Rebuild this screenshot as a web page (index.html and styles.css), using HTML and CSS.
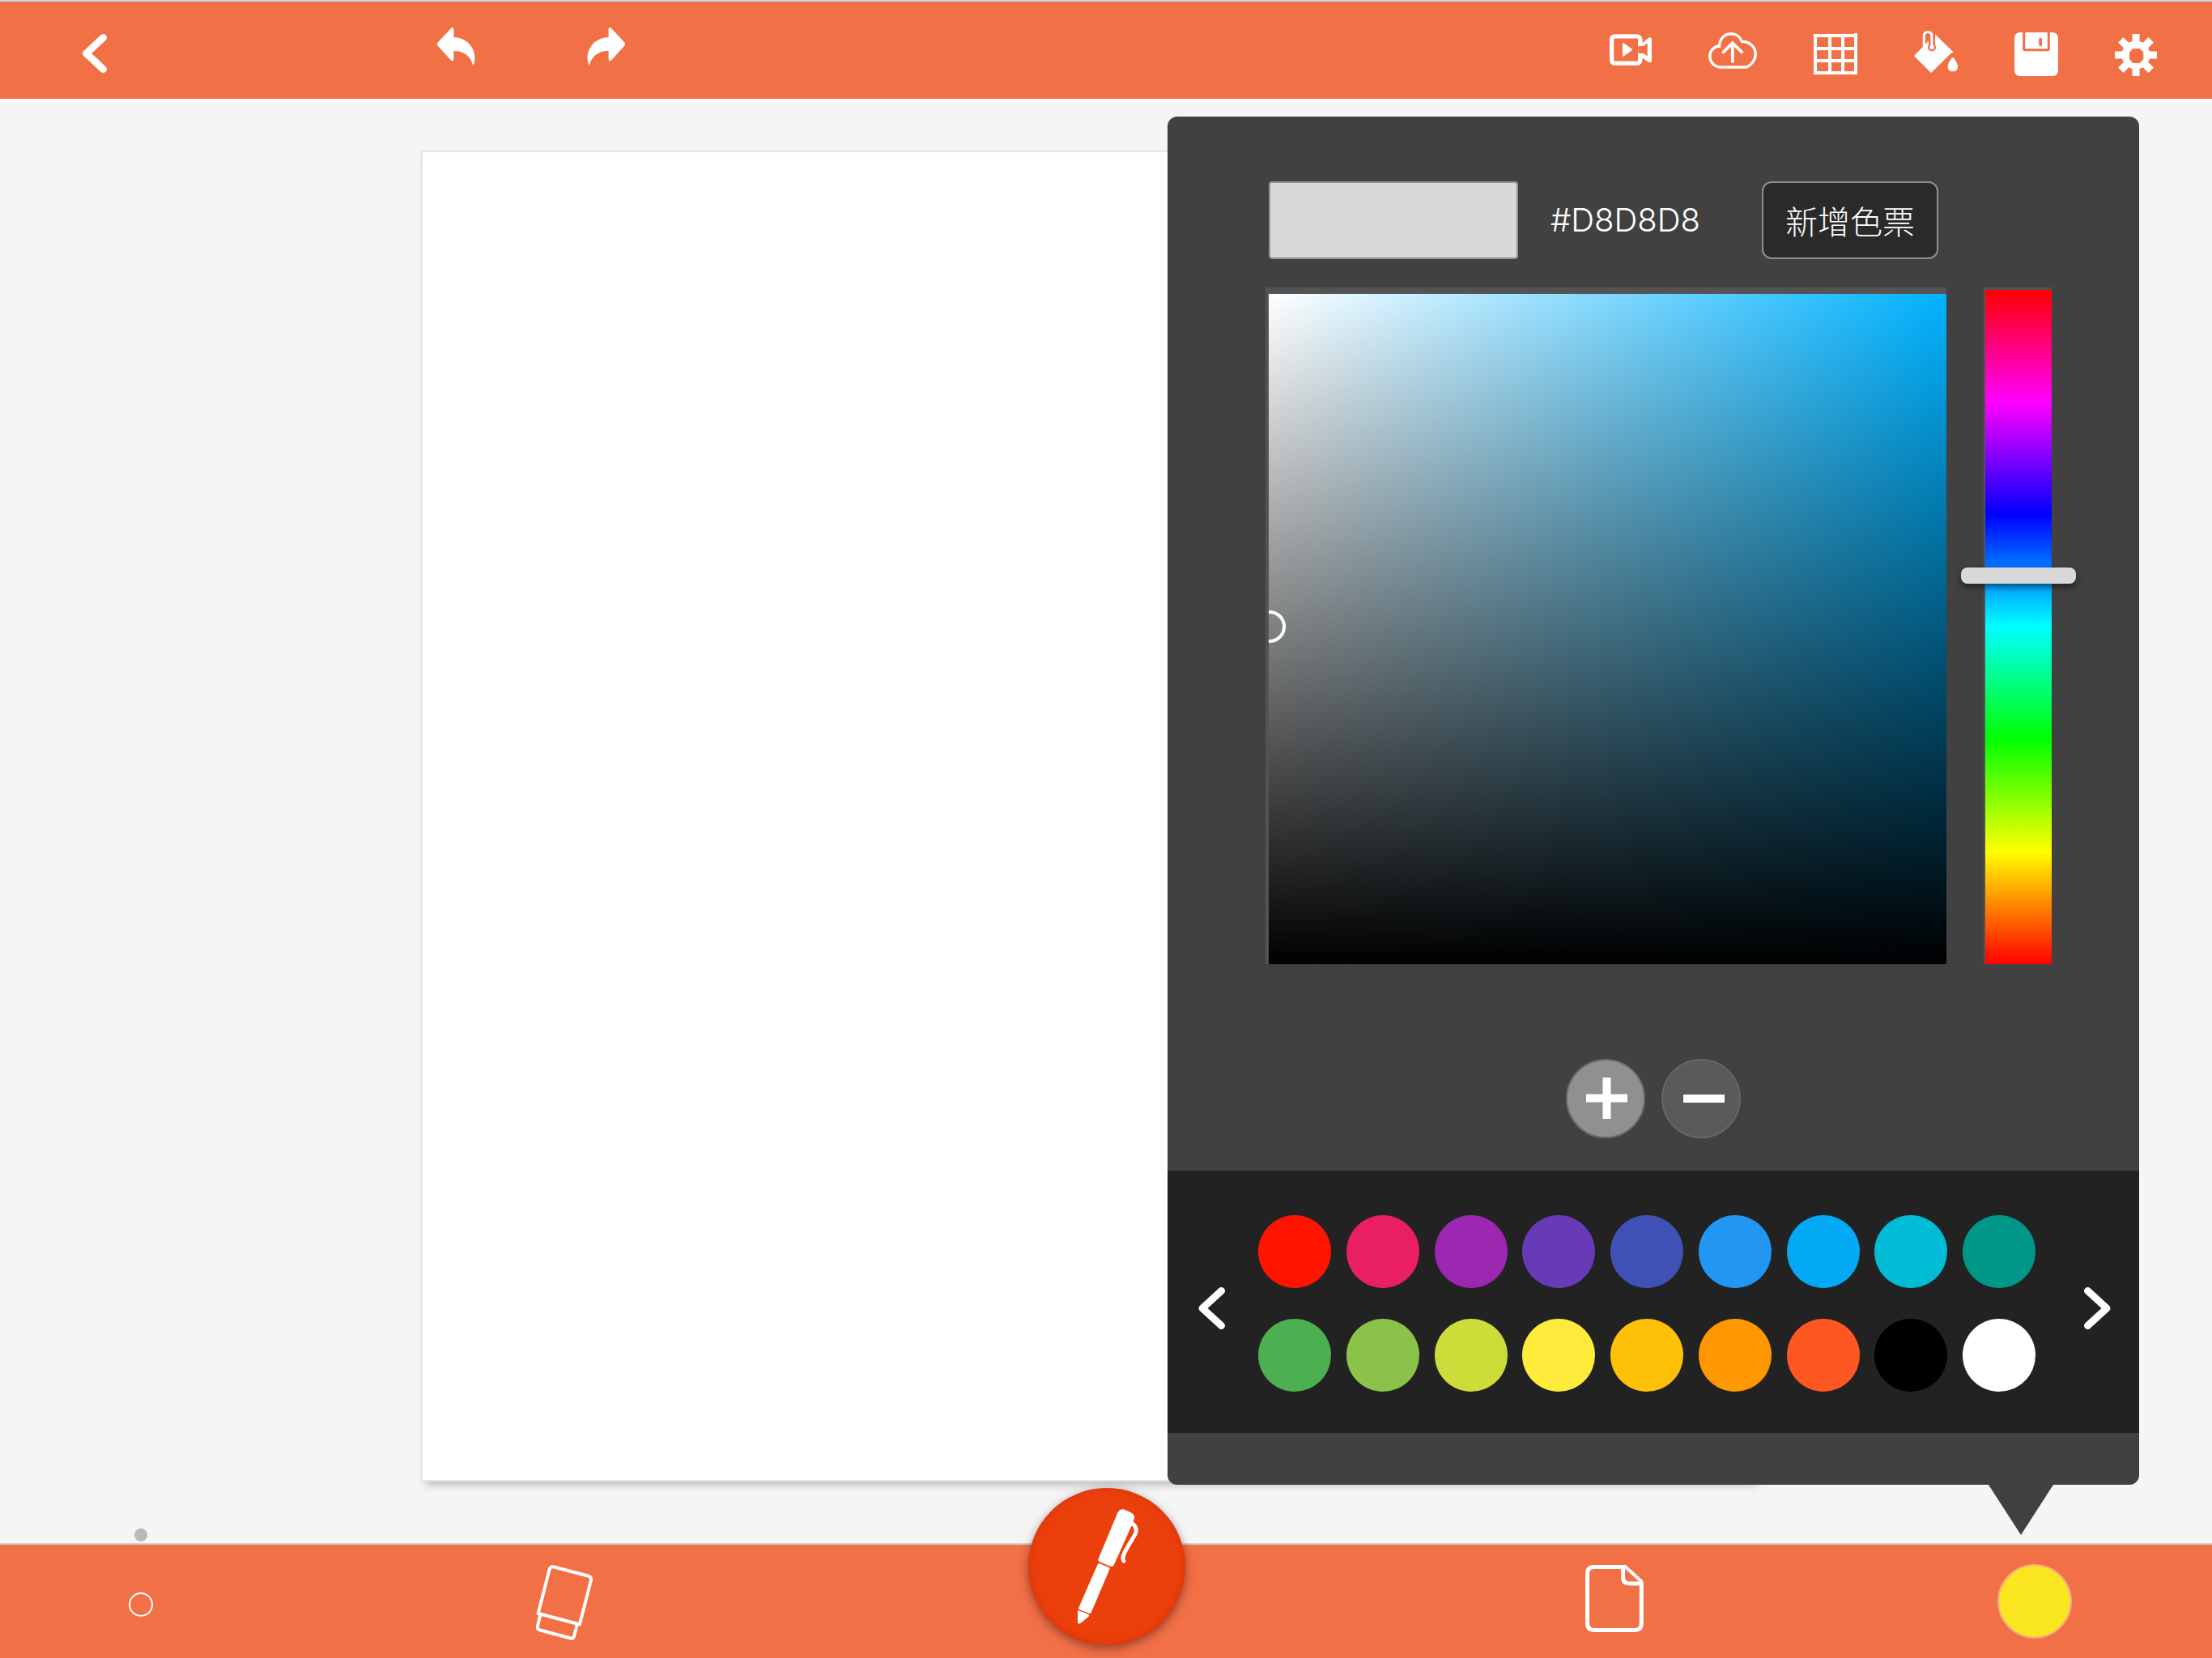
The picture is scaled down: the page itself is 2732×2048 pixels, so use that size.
FILE: index.html
```html
<!DOCTYPE html>
<html lang="zh-Hant">
<head>
<meta charset="utf-8">
<meta name="viewport" content="width=device-width, initial-scale=1">
<title>繪圖板</title>
<link rel="stylesheet" href="styles.css">
</head>
<body>
<div class="app">
  <header class="topbar">
    <button class="tool back" aria-label="返回">
      <svg width="30" height="64" viewBox="0 0 30 64"><path class="chevron" d="M25.500 16.500 4.500 36 25.500 55.500"/></svg>
    </button>
    <div class="history">
      <button class="tool" aria-label="復原">
        <svg width="47" height="64" viewBox="0 0 47 64"><path class="solid" d="M.6 22.500 17.500 4.500Q20.400 3 20.400 6V16C37 17 46.500 28 46.500 42Q46.500 47 44 51C42 40 33 32.500 20.400 33V43Q20.400 46 17.500 45L.6 26.500Q-.6 24.500.6 22.500Z"/></svg>
      </button>
      <button class="tool" aria-label="重做">
        <svg width="47" height="64" viewBox="0 0 47 64"><path class="solid" transform="translate(47 0) scale(-1 1)" d="M.6 22.500 17.500 4.500Q20.400 3 20.400 6V16C37 17 46.500 28 46.500 42Q46.500 47 44 51C42 40 33 32.500 20.400 33V43Q20.400 46 17.500 45L.6 26.500Q-.6 24.500.6 22.500Z"/></svg>
      </button>
    </div>
    <div class="actions">
      <button class="tool" aria-label="錄影">
        <svg width="52" height="64" viewBox="0 0 52 64">
          <rect class="line" x="2.600" y="14.800" width="35.200" height="33.400" rx="4" stroke-width="5.300"/>
          <path class="solid" d="M35 27 40.700 22.700 48 16.700Q50 15.500 52 17.500V46Q50 48 48 46.800L40.700 41.700 35 36Z"/>
          <path class="cut" d="M35.300 27H41.700L46.700 23.300V39.500L41.700 35.700H35.300Z"/>
          <path class="solid" d="M16 23.500Q16 22.300 17.200 23L27.600 30.500Q28.400 31.300 27.600 32L17.200 39.800Q16 40.500 16 39.300Z"/>
        </svg>
      </button>
      <button class="tool" aria-label="上傳">
        <svg width="60" height="64" viewBox="0 0 60 64">
          <path class="line" stroke-width="3.400" d="M15 53C7 52.500 1.800 46.500 1.800 39.500 1.800 32 7.500 27 13.500 27 14 17 20.500 11.700 28 11.700 34.500 11.700 39.500 15.500 41.300 21.200 50 21 58.300 27.500 58.300 36.700 58.300 43 54 50 47.300 53Z"/>
          <path class="line round" stroke-width="3.800" d="M29.800 46V23M18.500 34.300 29.800 23.200 41.300 34.300"/>
        </svg>
      </button>
      <button class="tool" aria-label="格線">
        <svg width="54" height="64" viewBox="0 0 54 64"><path class="line" stroke-width="4" d="M2 12V62M20 12V62M36 12V62M52 11V62M0 14H54M0 30H54M0 45H54M0 60H54"/></svg>
      </button>
      <button class="tool" aria-label="填色">
        <svg width="54" height="64" viewBox="0 0 54 64">
          <path class="solid" d="M0 39 26 12.300 48.700 34.600 45.500 36 21 60Z"/>
          <path class="cutline" stroke-width="8" d="M22 12V28"/>
          <circle class="cut" cx="22" cy="28.500" r="5"/>
          <path class="line" stroke-width="3" d="M12.300 27V14.500Q12.300 9.500 17 9.500T21.900 14.500V27"/>
          <circle class="solid" cx="22" cy="28.500" r="2.800"/>
          <path class="solid" d="M47.700 40.700C49 40.700 54 48 54 52.500 54 56 51.500 58.300 47.800 58.300S41.700 56 41.700 52.500C41.700 48 46.500 40.700 47.700 40.700Z"/>
        </svg>
      </button>
      <button class="tool" aria-label="儲存">
        <svg width="54" height="64" viewBox="0 0 54 64">
          <rect class="solid" y="10" width="54" height="54" rx="6.500"/>
          <path class="cutline" stroke-width="3" d="M11.700 10V30.500Q11.700 31.800 13 31.800H41Q42.300 31.800 42.300 30.500V10"/>
          <rect class="cut" x="30.300" y="16.700" width="3.700" height="10.500" rx="1.800"/>
        </svg>
      </button>
      <button class="tool" aria-label="設定">
        <svg width="52" height="64" viewBox="0 0 52 64">
          <path class="line" stroke-width="9" d="M26 12V64M0 38H52M7.300 19.300 44.700 56.700M44.700 19.300 7.300 56.700"/>
          <circle class="solid" cx="26" cy="38" r="17.500"/>
          <path class="cut" d="M22.300 30H30.700L35.300 34.600V43L30.700 48H22.300L18 43V34.600Z"/>
        </svg>
      </button>
    </div>
  </header>

  <main class="workspace">
    <div class="paper"></div>
    <span class="size-hint"></span>

    <section class="picker" aria-label="色彩">
      <div class="current">
        <span class="preview"></span>
        <output class="hex">#D8D8D8</output>
        <button class="add-swatch">新增色票</button>
      </div>
      <div class="fields">
        <div class="shade"><span class="cursor"></span></div>
        <input class="hue" type="range" min="0" max="360" value="152" aria-label="色相">
      </div>
      <div class="edit">
        <button class="round-btn plus" aria-label="增加"><svg width="60" height="52" viewBox="0 0 60 52"><path class="line" stroke-width="10" d="M6 25.500H57M31.500 0V51"/></svg></button>
        <button class="round-btn minus" aria-label="移除"><svg width="60" height="52" viewBox="0 0 60 52"><path class="line" stroke-width="10" d="M8 26H59"/></svg></button>
      </div>
      <div class="palette">
        <button class="tool" aria-label="上一頁"><svg width="33" height="68" viewBox="0 0 33 68"><path class="chevron" d="M28.500 18.500 5 40 28.500 61.500"/></svg></button>
        <div class="swatches">
          <div class="swatch-row">
            <button class="swatch red" aria-label="紅"></button>
            <button class="swatch pink" aria-label="粉紅"></button>
            <button class="swatch purple" aria-label="紫"></button>
            <button class="swatch violet" aria-label="深紫"></button>
            <button class="swatch indigo" aria-label="靛"></button>
            <button class="swatch blue" aria-label="藍"></button>
            <button class="swatch sky" aria-label="天藍"></button>
            <button class="swatch cyan" aria-label="青"></button>
            <button class="swatch teal" aria-label="藍綠"></button>
          </div>
          <div class="swatch-row">
            <button class="swatch green" aria-label="綠"></button>
            <button class="swatch light-green" aria-label="淺綠"></button>
            <button class="swatch lime" aria-label="萊姆"></button>
            <button class="swatch yellow" aria-label="黃"></button>
            <button class="swatch amber" aria-label="琥珀"></button>
            <button class="swatch orange" aria-label="橙"></button>
            <button class="swatch deep-orange" aria-label="深橙"></button>
            <button class="swatch black" aria-label="黑"></button>
            <button class="swatch white" aria-label="白"></button>
          </div>
        </div>
        <button class="tool" aria-label="下一頁"><svg width="33" height="68" viewBox="0 0 33 68"><path class="chevron" d="M4.500 18.500 28 40 4.500 61.500"/></svg></button>
      </div>
      <svg class="tail" width="80" height="62" viewBox="0 0 80 62"><path d="M0 0H80L40 62Z"/></svg>
    </section>
  </main>

  <footer class="bottombar">
    <button class="tool" aria-label="筆刷大小"><span class="brush-size"></span></button>
    <button class="tool" aria-label="橡皮擦">
      <svg width="72" height="104" viewBox="0 0 72 104"><path class="line" stroke-width="4" d="M3.500 67.500 17.500 13Q18.700 8.500 23 9.500L65 20.500Q70 22 68.800 26.500L54.500 82M2 66.500 55 80.500M6.500 68 3 82.500Q2 86.500 6 87.500L43.500 97.500Q47 98.500 48 95L52 80"/></svg>
    </button>
    <div class="pen-slot">
      <button class="pen" aria-label="筆">
        <svg width="194" height="194" viewBox="120 114 582 582">
          <path class="solid" d="M452 203Q460 190 473 193L499 204Q515 212 513 226L509 240 438 398Q434 407 426 405L384 388Q377 384 380 376Z"/>
          <path class="line round" stroke-width="15" d="M504 244Q527 262 517 284C506 304 486 332 475 358Q467 376 474 385"/>
          <path class="solid" d="M384 394 418 407Q424 410 421 416L353 576Q351 581 346 579L309 565Q304 562 307 557L376 399Q379 392 384 394Z"/>
          <path class="solid" d="M306 568 342 582Q348 586 343 591L314 615Q304 621 303 612V571Q303 567 306 568Z"/>
        </svg>
      </button>
    </div>
    <button class="tool" aria-label="頁面">
      <svg width="72" height="90" viewBox="0 0 72 90"><path class="line" stroke-width="5" d="M50 2.500H11Q2.500 2.500 2.500 11V72Q2.500 80.500 11 80.500H61Q69.300 80.500 69.300 72V20.500M46.500 2.500V15Q46.500 23 54.500 23H69.500"/><path class="line" stroke-width="4" d="M48.500 1.500 70 21"/></svg>
    </button>
    <button class="tool" aria-label="目前顏色"><span class="ink"></span></button>
  </footer>
</div>
</body>
</html>
```
FILE: styles.css
```css
* {
  box-sizing: border-box;
}

body {
  margin: 0;
  background: #f5f5f5;
  font-family: "Inter", "Noto Sans CJK TC", sans-serif;
}

button {
  margin: 0;
  padding: 0;
  border: 0;
  background: none;
  color: inherit;
  font: inherit;
  cursor: pointer;
}

svg {
  display: block;
}

.app {
  display: grid;
  grid-template-rows: auto 1fr auto;
  min-height: 100vh;
}

/* icon parts */
.solid { fill: #fff; }
.line { fill: none; stroke: #fff; }
.round { stroke-linecap: round; stroke-linejoin: round; }
.cut { fill: #f27046; }
.cutline { fill: none; stroke: #f27046; }
.chevron {
  fill: none;
  stroke: #fff;
  stroke-width: 9;
  stroke-linecap: round;
  stroke-linejoin: round;
}

.topbar {
  display: flex;
  align-items: center;
  height: 122px;
  padding: 0 68px 0 102px;
  border-top: 2px solid #cdd5d8;
  background: #f27046;
}

.history {
  display: flex;
  gap: 138px;
  margin-left: 408px;
}

.actions {
  display: flex;
  gap: 70px;
  margin-left: auto;
}

.workspace {
  position: relative;
  display: flex;
  padding: 64px 560px 76px 520px;
}

.paper {
  flex: 1;
  border: 2px solid #e6e4e4;
  background: #fff;
  box-shadow: 2px 8px 10px -4px rgba(60, 40, 40, 0.3);
}

.size-hint {
  position: absolute;
  left: 166px;
  bottom: 2px;
  width: 16px;
  height: 16px;
  border-radius: 50%;
  background: #bbb9b9;
}

/* colour picker popover */
.picker {
  position: absolute;
  top: 22px;
  right: 90px;
  width: 1200px;
  padding: 80px 0 64px;
  border-radius: 12px;
  background: #414141;
  color: #fff;
}

.current {
  display: flex;
  align-items: center;
  padding-left: 125px;
}

.preview {
  width: 308px;
  height: 96px;
  border: 2px solid #929292;
  border-radius: 4px;
  background: #d8d8d8;
}

.hex {
  width: 261px;
  margin-left: 40px;
  font-size: 40px;
  font-weight: 300;
  line-height: 48px;
}

.add-swatch {
  width: 218px;
  height: 96px;
  border: 2px solid #8f8f8f;
  border-radius: 12px;
  background: #2a2a2a;
  font-family: "Noto Sans CJK TC", sans-serif;
  font-size: 40px;
  font-weight: 300;
  line-height: 48px;
}

.fields {
  display: flex;
  gap: 46px;
  margin-top: 35px;
  padding-left: 121px;
}

.shade {
  position: relative;
  width: 841px;
  height: 836px;
  overflow: hidden;
  border-top: 8px solid #535353;
  border-left: 4px solid #535353;
  background:
    linear-gradient(to top, #000, transparent) padding-box,
    linear-gradient(to right, #fff, #00b2ff) padding-box;
}

.cursor {
  position: absolute;
  top: 391px;
  left: -19px;
  width: 40px;
  height: 40px;
  border: 4px solid #fff;
  border-radius: 50%;
}

.hue {
  width: 84px;
  height: 836px;
  margin: 0;
  appearance: none;
  writing-mode: vertical-lr;
  border-top: 3px solid #535353;
  border-left: 2px solid #535353;
  background: linear-gradient(#f00, #f0f, #00f, #0ff, #0f0, #ff0, #f00) padding-box;
}

.hue::-webkit-slider-thumb {
  appearance: none;
  width: 142px;
  height: 20px;
  border-radius: 8px;
  background: #d8d8d8;
  box-shadow: 0 4px 8px rgba(0, 0, 0, 0.5);
}

.edit {
  display: flex;
  justify-content: center;
  gap: 20px;
  margin: 117px 0 40px;
}

.round-btn {
  display: grid;
  place-items: center;
  width: 98px;
  height: 98px;
  border-radius: 50%;
}

.plus {
  border: 2px solid #6c6b6c;
  background: #918f91;
}

.minus {
  border: 2px solid #676767;
  background: #5a5a5a;
}

.palette {
  display: flex;
  align-items: center;
  gap: 41px;
  padding: 55px 35px 51px 38px;
  background: #222;
}

.swatches {
  display: grid;
  flex: 1;
  gap: 38px;
  padding-right: 19px;
}

.swatch-row {
  display: flex;
  justify-content: space-between;
}

.swatch {
  width: 90px;
  height: 90px;
  border-radius: 50%;
}

.red { background: #ff1400; }
.pink { background: #e91e63; }
.purple { background: #9c27b0; }
.violet { background: #673ab7; }
.indigo { background: #3f51b5; }
.blue { background: #2196f3; }
.sky { background: #03a9f4; }
.cyan { background: #00bcd4; }
.teal { background: #009688; }
.green { background: #4caf50; }
.light-green { background: #8bc34a; }
.lime { background: #cddc39; }
.yellow { background: #ffeb3b; }
.amber { background: #ffc107; }
.orange { background: #ff9800; }
.deep-orange { background: #ff5722; }
.black { background: #000; }
.white { background: #fff; }

.tail {
  position: absolute;
  top: 100%;
  right: 106px;
  fill: #414141;
}

.bottombar {
  display: grid;
  grid-template-columns: 348fr 698fr 642fr 612fr 426fr;
  place-items: center;
  height: 142px;
  padding-right: 6px;
  border-top: 2px solid #cdd5d8;
  background: #f27046;
}

.brush-size {
  display: block;
  width: 30px;
  height: 30px;
  margin-top: 8px;
  border: 2px solid #fff;
  border-radius: 50%;
}

.pen-slot {
  position: relative;
  width: 194px;
  height: 140px;
}

/* the active tool rises out of the bar */
.pen {
  position: absolute;
  bottom: 16px;
  left: 0;
  border-radius: 50%;
  background: #eb400b;
  box-shadow: 0 4px 12px rgba(60, 20, 20, 0.5), inset 0 0 12px rgba(200, 40, 20, 0.5);
}

.ink {
  display: block;
  width: 92px;
  height: 92px;
  border: 2px solid #f9a58c;
  border-radius: 50%;
  background: #f9e61e;
}
```
